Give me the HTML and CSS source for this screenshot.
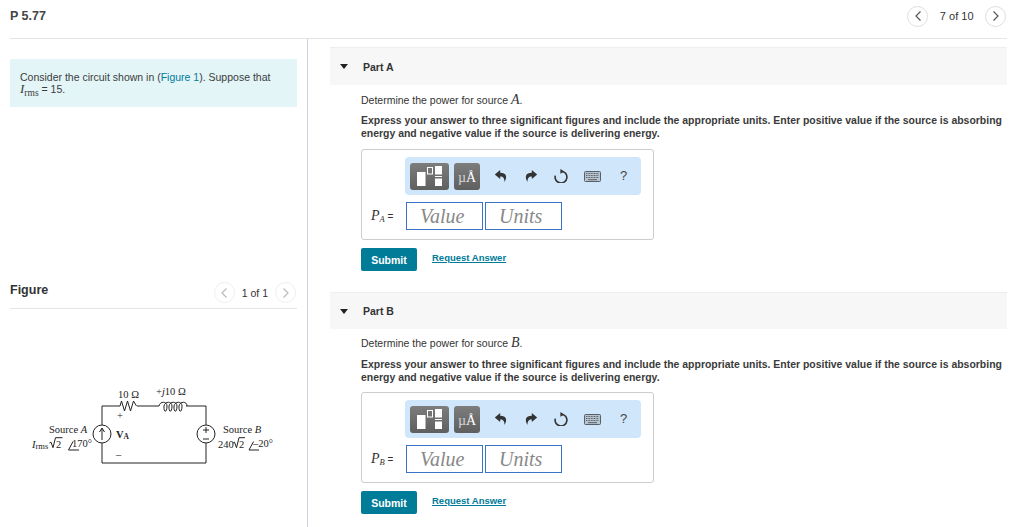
FILE: index.html
```html
<!DOCTYPE html>
<html lang="en">
<head>
  <meta charset="UTF-8">
  <title>P 5.77</title>
  <link rel="stylesheet" href="styles.css">
</head>
<body>
  <svg class="defs" width="0" height="0">
    <symbol id="ico-undo" viewBox="0 0 14 14"><path d="M6.2 1 L.8 5.6 L6.2 10 V7.4 C9 7.2 10.3 8.8 10.6 13 C13.4 8 12.6 3.8 6.2 3.8 Z"/></symbol>
    <symbol id="ico-redo" viewBox="0 0 14 14"><path d="M7.8 1 L13.2 5.6 L7.8 10 V7.4 C5 7.2 3.7 8.8 3.4 13 C.6 8 1.4 3.8 7.8 3.8 Z"/></symbol>
    <symbol id="ico-reset" viewBox="0 0 14 14"><path d="M7.4 2.2 A5.9 5.9 0 1 1 1.3 6.6" fill="none" stroke="#333" stroke-width="1.6"/><path d="M6.4 0 L10.2 2.4 L6.4 4.8 Z"/></symbol>
    <symbol id="ico-keys" viewBox="0 0 17 11"><rect x=".5" y=".5" width="16" height="10" rx="1" fill="#b9c4ce" stroke="#55606a"/><path d="M2 2.5h13M2 4.5h13M2 6.5h13" stroke="#55606a" stroke-dasharray="1 .6"/><path d="M4 8.7h9" stroke="#55606a"/></symbol>
    <symbol id="ico-tmpl" viewBox="0 0 25 20"><rect x="0" y="6" width="8.5" height="14" fill="#fff"/><rect x="10.5" y="1.5" width="5" height="6.5" fill="none" stroke="#fff"/><rect x="18" y="0" width="7" height="8.5" fill="#fff"/><rect x="18" y="10" width="7" height="1" fill="#fff"/><rect x="18" y="12.5" width="7" height="7.5" fill="#fff"/></symbol>
  </svg>

  <header class="top">
    <h1>P 5.77</h1>
    <div class="pager">
      <span class="round">
        <svg width="8" height="12" viewBox="0 0 8 12"><path d="M6.5 1.5 L2 6 L6.5 10.5" fill="none" stroke="#555" stroke-width="1.2"/></svg>
      </span>
      <span>7 of 10</span>
      <span class="round">
        <svg width="8" height="12" viewBox="0 0 8 12"><path d="M1.5 1.5 L6 6 L1.5 10.5" fill="none" stroke="#555" stroke-width="1.2"/></svg>
      </span>
    </div>
  </header>

  <div class="main">
    <aside class="left">
      <div class="intro">
        Consider the circuit shown in (<a href="#">Figure 1</a>). Suppose that<br>
        <i class="math irms">I</i><sub class="math">rms</sub> = 15.
      </div>

      <div class="fig-head">
        <h2>Figure</h2>
        <div class="pager small">
          <span class="round faint">
            <svg width="8" height="12" viewBox="0 0 8 12"><path d="M6.5 1.5 L2 6 L6.5 10.5" fill="none" stroke="#bbb" stroke-width="1.2"/></svg>
          </span>
          <span>1 of 1</span>
          <span class="round faint">
            <svg width="8" height="12" viewBox="0 0 8 12"><path d="M1.5 1.5 L6 6 L1.5 10.5" fill="none" stroke="#bbb" stroke-width="1.2"/></svg>
          </span>
        </div>
      </div>

      <svg class="circuit" width="287" height="90" viewBox="10 385 287 90">
        <g fill="none" stroke="#222" stroke-width="1">
          <!-- wires -->
          <path d="M102 425 V406 H120 M137 406 H159 M186 406 H206 V425 M206 443 V463 H102 V443"/>
          <!-- resistor -->
          <path d="M120 406 l1.5 -5 l3 10 l3 -10 l3 10 l3 -10 l3 5"/>
          <!-- inductor -->
          <path d="M159 406 c1 -5 8 -5 8 0 c0 7 -3.5 7 -3 0 c1 -5 8 -5 8 0 c0 7 -3.5 7 -3 0 c1 -5 8 -5 8 0 c0 7 -3.5 7 -3 0 c1 -5 8 -5 8 0 c0 7 -3.5 7 -3 0 c1 -5 8 -5 8 0"/>
          <!-- sources -->
          <circle cx="102" cy="434" r="9"/>
          <circle cx="206" cy="434" r="9"/>
          <path d="M102 440 V429 M99.5 432 L102 428 L104.5 432"/>
          <path d="M203 430 h6 M206 427 v6 M203 439 h6"/>
          <!-- radicals and angle signs -->
          <path d="M49.5 443 l1.5 -.8 l2 5.5 l2.5 -10 h7"/>
          <path d="M68.5 450 L73 441.5 M68.5 450 H79"/>
          <path d="M233 443 l1.5 -.8 l2 5.5 l2.5 -10 h6"/>
          <path d="M249 450 L253.5 441.5 M249 450 H259"/>
        </g>
        <g class="ckt">
          <text x="118" y="398">10 Ω</text>
          <text x="156" y="395">+<tspan font-style="italic">j</tspan>10 Ω</text>
          <text x="117" y="419">+</text>
          <text x="116" y="458">–</text>
          <text x="49" y="433">Source <tspan font-style="italic">A</tspan></text>
          <text x="32" y="448"><tspan font-style="italic">I</tspan><tspan font-size="8.5" dy="1">rms</tspan></text>
          <text x="56" y="448">2</text>
          <text x="72" y="447">170°</text>
          <text x="116" y="438" font-weight="bold">V<tspan font-size="7.5" dy="1">A</tspan></text>
          <text x="223" y="433">Source <tspan font-style="italic">B</tspan></text>
          <text x="218" y="448">240</text>
          <text x="239" y="448">2</text>
          <text x="253" y="447">–20°</text>
        </g>
      </svg>
    </aside>

    <main class="right">
      <section class="part">
        <div class="part-head"><span class="caret"></span>Part A</div>
        <div class="part-body">
          <p>Determine the power for source <i class="math var">A</i>.</p>
          <p class="strong">Express your answer to three significant figures and include the appropriate units. Enter positive value if the source is absorbing energy and negative value if the source is delivering energy.</p>
          <div class="answer">
            <div class="toolbar">
              <span class="tbtn tmpl"><svg width="25" height="20"><use href="#ico-tmpl"/></svg></span>
              <span class="tbtn unit"><span class="mu">µ</span>Å</span>
              <svg class="tico" width="14" height="14"><use href="#ico-undo"/></svg>
              <svg class="tico" width="14" height="14"><use href="#ico-redo"/></svg>
              <svg class="tico" width="14" height="14"><use href="#ico-reset"/></svg>
              <svg class="tico" width="17" height="11"><use href="#ico-keys"/></svg>
              <span class="help">?</span>
            </div>
            <div class="entry">
              <label><i class="math">P<sub>A</sub></i> =</label>
              <span class="field">Value</span>
              <span class="field">Units</span>
            </div>
          </div>
          <div class="actions">
            <button>Submit</button>
            <a href="#">Request Answer</a>
          </div>
        </div>
      </section>

      <section class="part part-b">
        <div class="part-head"><span class="caret"></span>Part B</div>
        <div class="part-body">
          <p>Determine the power for source <i class="math var">B</i>.</p>
          <p class="strong">Express your answer to three significant figures and include the appropriate units. Enter positive value if the source is absorbing energy and negative value if the source is delivering energy.</p>
          <div class="answer">
            <div class="toolbar">
              <span class="tbtn tmpl"><svg width="25" height="20"><use href="#ico-tmpl"/></svg></span>
              <span class="tbtn unit"><span class="mu">µ</span>Å</span>
              <svg class="tico" width="14" height="14"><use href="#ico-undo"/></svg>
              <svg class="tico" width="14" height="14"><use href="#ico-redo"/></svg>
              <svg class="tico" width="14" height="14"><use href="#ico-reset"/></svg>
              <svg class="tico" width="17" height="11"><use href="#ico-keys"/></svg>
              <span class="help">?</span>
            </div>
            <div class="entry">
              <label><i class="math">P<sub>B</sub></i> =</label>
              <span class="field">Value</span>
              <span class="field">Units</span>
            </div>
          </div>
          <div class="actions">
            <button>Submit</button>
            <a href="#">Request Answer</a>
          </div>
        </div>
      </section>
    </main>
  </div>
</body>
</html>
```

FILE: styles.css
```css
/* base */
html, body {
  margin: 0;
  padding: 0;
}
body {
  width: 1024px;
  height: 527px;
  overflow: hidden;
  background: #fff;
  color: #333;
  font-family: "Liberation Sans", Arial, sans-serif;
  font-size: 10.5px;
  line-height: 12px;
}
.defs {
  position: absolute;
}
.math {
  font-family: "Liberation Serif", serif;
}
.var {
  font-size: 14px;
  line-height: 0;
}
a {
  color: #007c99;
  text-decoration: none;
}

/* top bar */
.top {
  display: flex;
  align-items: center;
  justify-content: space-between;
  height: 39px;
  margin: 0 17px 0 10px;
  box-sizing: border-box;
  border-bottom: 1px solid #e5e5e5;
}
h1 {
  margin: 0 0 6px;
  font-size: 12.5px;
  font-weight: bold;
  color: #444;
}
.pager {
  display: flex;
  align-items: center;
  gap: 11.5px;
  margin: 0 1px 6px 0;
  font-size: 11px;
  color: #333;
}
.round {
  display: flex;
  align-items: center;
  justify-content: center;
  width: 21px;
  height: 21px;
  box-sizing: border-box;
  border: 1px solid #ddd;
  border-radius: 50%;
}
.round.faint {
  border-color: #eee;
}

/* two columns */
.main {
  display: flex;
  height: 488px;
}
.left {
  width: 287px;
  margin-left: 10px;
  padding-right: 10px;
  border-right: 1px solid #ccd3da;
}
.right {
  width: 677px;
  margin-left: 22px;
  padding-top: 8px;
}

/* left column */
.intro {
  margin-top: 20px;
  height: 48px;
  padding: 12px 10px 0;
  box-sizing: border-box;
  background: #e3f5f7;
  color: #3c3c3c;
}
.intro .irms {
  font-size: 13px;
}
.intro sub {
  font-size: 9.5px;
  line-height: 0;
}
.fig-head {
  display: flex;
  align-items: center;
  justify-content: space-between;
  height: 38px;
  margin-top: 163px;
  border-bottom: 1px solid #e5e5e5;
}
h2 {
  margin: 2px 0 0;
  font-size: 12.5px;
  font-weight: bold;
}
.small {
  gap: 7px;
  margin: 0 1px 0 0;
  padding-top: 7px;
  font-size: 10.5px;
}
.circuit {
  display: block;
  margin-top: 76px;
}
.ckt text {
  font-family: "Liberation Serif", serif;
  font-size: 10.5px;
  fill: #222;
}

/* parts */
.part-head {
  display: flex;
  align-items: center;
  height: 38px;
  box-sizing: border-box;
  padding-left: 10px;
  border-top: 1px solid #eee;
  background: #f7f7f7;
  font-size: 10.5px;
  font-weight: bold;
  color: #333;
}
.caret {
  width: 0;
  height: 0;
  margin-right: 15px;
  border-left: 4.5px solid transparent;
  border-right: 4.5px solid transparent;
  border-top: 5px solid #222;
}
.part-body {
  padding: 9px 0 21px 31px;
}
.part-body p {
  margin: 0 0 8px;
  font-size: 10.5px;
}
.part-body p.strong {
  margin-bottom: 9px;
  font-size: 10.45px;
  font-weight: bold;
  line-height: 13px;
  color: #3a3a3a;
}
/* second part sits a pixel tighter */
.part-b .part-head {
  height: 37px;
}
.part-b .part-body {
  padding-top: 8px;
}
.part-b .part-body p {
  margin-bottom: 9px;
}
.part-b .part-body p.strong {
  margin-bottom: 8px;
}

/* answer box */
.answer {
  width: 293px;
  height: 91px;
  padding: 7px 0 0 43px;
  box-sizing: border-box;
  border: 1px solid #ccc;
  border-radius: 3px;
}
.toolbar {
  display: flex;
  align-items: center;
  width: 236px;
  height: 38px;
  box-sizing: border-box;
  padding-left: 5px;
  background: #cfe6fb;
  border-radius: 4px;
}
.tbtn {
  display: flex;
  align-items: center;
  justify-content: center;
  height: 27px;
  box-sizing: border-box;
  border-radius: 3px;
  background: linear-gradient(#7d7d7d, #5f5f5f);
  color: #fff;
}
.tmpl {
  width: 39px;
  margin-right: 5px;
}
.unit {
  width: 26px;
  margin-right: 14px;
  padding-top: 3px;
  font-family: "Liberation Serif", serif;
  font-size: 14px;
}
.mu {
  color: #d5d5d5;
}
.tico {
  margin-right: 16px;
  fill: #333;
}
.help {
  margin-left: 3px;
  font-size: 13px;
  color: #444;
}
.entry {
  display: flex;
  align-items: center;
  margin-top: 7px;
  margin-left: -34px;
}
.entry label {
  width: 35px;
  font-size: 10px;
  white-space: nowrap;
}
.entry .math {
  font-size: 14px;
}
.entry sub {
  font-size: 8.5px;
  line-height: 0;
  vertical-align: -2px;
}
.field {
  width: 77px;
  height: 28px;
  margin-right: 2px;
  padding-left: 13px;
  box-sizing: border-box;
  border: 1px solid #3b73c8;
  font-family: "Liberation Serif", serif;
  font-style: italic;
  font-size: 20px;
  line-height: 26px;
  color: #888;
}

/* submit row */
.actions {
  display: flex;
  align-items: center;
  gap: 15px;
  margin-top: 8px;
}
button {
  width: 56px;
  height: 23px;
  padding: 0;
  border: 0;
  border-radius: 2px;
  background: #007c99;
  color: #fff;
  font-family: "Liberation Sans", Arial, sans-serif;
  font-size: 10.5px;
  font-weight: bold;
}
.actions a {
  margin-top: -4px;
  font-weight: bold;
  font-size: 9.5px;
  text-decoration: underline;
}
```
